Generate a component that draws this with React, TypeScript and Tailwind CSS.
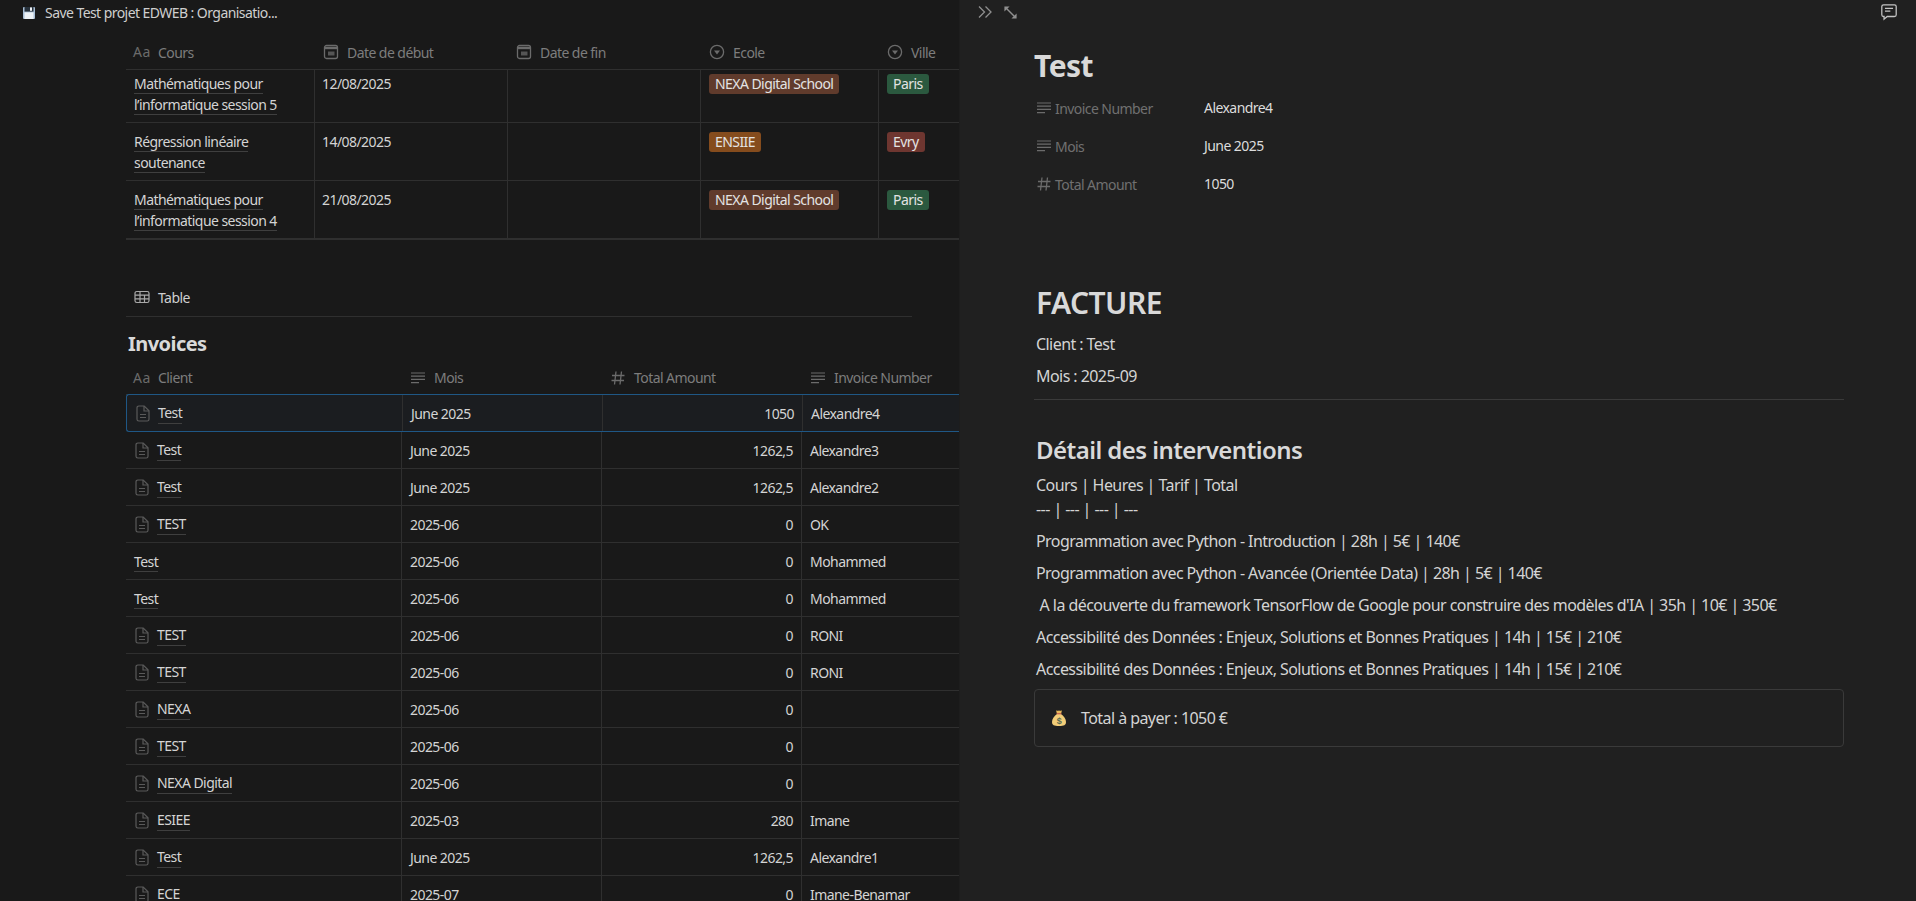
const F = "font-['Noto_Sans','Lato',sans-serif] tracking-[-0.035em]";
const Lines = ({ c = "w-4 h-4" }: { c?: string }) => (
  <svg viewBox="0 0 16 16" className={c} fill="none" stroke="#6b6b6b" strokeWidth="1.2"><path d="M1 3h14M1 6.2h14M1 9.4h14M1 12.6h8" /></svg>
);
const Hash = () => (
  <svg viewBox="0 0 16 16" className="w-4 h-4" fill="none" stroke="#6b6b6b" strokeWidth="1.3"><path d="M6 1.5 4.500 14.500M11.500 1.500 10 14.500M2 5.500h12.500M1.500 10.500h12.500" /></svg>
);
const Cal = () => (
  <svg viewBox="0 0 16 16" className="w-4 h-4" fill="none"><rect x="1.5" y="1.5" width="13" height="13" rx="2" stroke="#6b6b6b" strokeWidth="1.3" /><path d="M1.500 2.800h13v2.400h-13z" fill="#6b6b6b" /><path d="M5 7.500h6.500v4H5z" fill="#555" /></svg>
);
const Sel = () => (
  <svg viewBox="0 0 16 16" className="w-4 h-4" fill="none"><circle cx="8" cy="8" r="6.6" stroke="#6b6b6b" strokeWidth="1.3" /><path d="M5 6.500h6L8 10.500z" fill="#6b6b6b" /></svg>
);
const Aa = () => <span className="text-[14px] leading-none text-[#6b6b6b] w-[17px] tracking-[0.5px]">Aa</span>;
const Doc = () => (
  <svg viewBox="0 0 14 17" className="w-[14px] h-[17px] shrink-0" fill="none" stroke="#5a5a5a" strokeWidth="1.2"><path d="M2.800 1h5.400L13 5.800v8.400a1.800 1.800 0 0 1-1.800 1.800H2.800A1.800 1.800 0 0 1 1 14.200V2.800A1.800 1.800 0 0 1 2.800 1Z" /><path d="M8 1v5h5M4 9.500h6M4 12.500h6" /></svg>
);
const Floppy = () => (
  <svg viewBox="0 0 14 14" className="w-[14px] h-[14px]"><rect x="1" y="1" width="12" height="12" rx="1" fill="#a9bfd6" /><rect x="2.500" y="1" width="9" height="4.600" fill="#27313b" /><rect x="8" y="1.400" width="2" height="3.400" fill="#f2f4f6" /><rect x="2.500" y="6.400" width="9" height="6.600" fill="#eef2f6" /></svg>
);
const Bag = () => (
  <svg viewBox="0 0 16 18" className="w-4 h-[18px]"><path d="M5 1.200c1 .8 2 .8 3 .2 1 .6 2 .6 3-.2L10 5H6Z" fill="#e8b85a" /><path d="M6 5h4c3 2 5 5 5 8 0 3-2 4-7 4s-7-1-7-4c0-3 2-6 5-8Z" fill="#f2cd78" /><rect x="5.600" y="4.200" width="4.800" height="1.100" fill="#c0554a" /><text x="8" y="14.500" textAnchor="middle" fontSize="9" fontWeight="700" fill="#5b6b52" fontFamily="Liberation Sans">$</text></svg>
);

const Th = ({ icon, label, w, first }: { icon: React.ReactNode; label: string; w: string; first?: boolean }) => (
  <div className={`${w} shrink-0 flex items-center gap-[8px] ${first ? "pl-[7px]" : "pl-[9px]"} pb-[2px] text-[14px] text-[#7d7d7d]`}>
    {icon}<span>{label}</span>
  </div>
);

const Tag = ({ t, c }: { t: string; c: string }) => (
  <span className={`${c} inline-block h-[20px] leading-[20px] rounded-[3px] px-[6px] text-[14px] text-[#e3e3e3] whitespace-nowrap`}>{t}</span>
);

const courses = [
  { h: "h-[53px]", pt: "pt-[3px]", a: "Mathématiques pour", b: "l’informatique session 5", d: "12/08/2025", e: <Tag t="NEXA Digital School" c="bg-[#603b2c]" />, v: <Tag t="Paris" c="bg-[#2b593f]" /> },
  { h: "h-[58px]", pt: "pt-[8px]", a: "Régression linéaire", b: "soutenance", d: "14/08/2025", e: <Tag t="ENSIIE" c="bg-[#854c1d]" />, v: <Tag t="Evry" c="bg-[#6e3630]" /> },
  { h: "h-[59px]", pt: "pt-[8px]", a: "Mathématiques pour", b: "l’informatique session 4", d: "21/08/2025", e: <Tag t="NEXA Digital School" c="bg-[#603b2c]" />, v: <Tag t="Paris" c="bg-[#2b593f]" /> },
];

const invoices: [boolean, string, string, string, string][] = [
  [true, "Test", "June 2025", "1050", "Alexandre4"],
  [true, "Test", "June 2025", "1262,5", "Alexandre3"],
  [true, "Test", "June 2025", "1262,5", "Alexandre2"],
  [true, "TEST", "2025-06", "0", "OK"],
  [false, "Test", "2025-06", "0", "Mohammed"],
  [false, "Test", "2025-06", "0", "Mohammed"],
  [true, "TEST", "2025-06", "0", "RONI"],
  [true, "TEST", "2025-06", "0", "RONI"],
  [true, "NEXA", "2025-06", "0", ""],
  [true, "TEST", "2025-06", "0", ""],
  [true, "NEXA Digital", "2025-06", "0", ""],
  [true, "ESIEE", "2025-03", "280", "Imane"],
  [true, "Test", "June 2025", "1262,5", "Alexandre1"],
  [true, "ECE", "2025-07", "0", "Imane-Benamar"],
];

const U = ({ children }: { children: React.ReactNode }) => (
  <span className="border-b border-[#3f3f3f] leading-[20px] text-[#d4d4d4]">{children}</span>
);

const Prop = ({ icon, k, v }: { icon: React.ReactNode; k: string; v: string }) => (
  <div className="flex items-center h-[38px]">
    <div className="w-[170px] flex items-center gap-[3px] pl-[2px] text-[14px] text-[#707070]">{icon}<span>{k}</span></div>
    <div className="text-[14px] text-[#dcdcdc] pb-[1px]">{v}</div>
  </div>
);

const P = ({ children }: { children: React.ReactNode }) => <p className="leading-[24px] pt-[4px] pb-[4px] pl-[2px] text-[16px] text-[#d4d4d4] whitespace-pre">{children}</p>;

export default function App() {
  return (
    <div className={`${F} flex h-[901px] w-full overflow-hidden bg-[#191919] text-[#d4d4d4]`}>
      <div className="w-[960px] shrink-0 overflow-hidden">
        <div className="flex items-center h-[25px] pl-[22px] gap-[9px] text-[14px] text-[#cfcfcf]">
          <Floppy /><span>Save Test projet EDWEB : Organisatio...</span>
        </div>
        <div className="pl-[126px] pt-[12px]">
          <div className="flex h-[33px] items-center border-b border-[#2f2f2f]">
            <Th first w="w-[188px]" icon={<Aa />} label="Cours" />
            <Th w="w-[193px]" icon={<Cal />} label="Date de début" />
            <Th w="w-[193px]" icon={<Cal />} label="Date de fin" />
            <Th w="w-[178px]" icon={<Sel />} label="Ecole" />
            <Th w="w-[82px]" icon={<Sel />} label="Ville" />
          </div>
          {courses.map((r, i) => (
            <div key={i} className={`flex ${r.h} ${i === 2 ? "border-b-2" : "border-b"} border-[#2f2f2f] text-[14px] leading-[21px]`}>
              <div className={`w-[188px] shrink-0 ${r.pt} pl-[8px]`}>
                <div><U>{r.a}</U></div><div><U>{r.b}</U></div>
              </div>
              <div className={`w-[193px] shrink-0 border-l border-[#2f2f2f] ${r.pt} pl-[7px]`}>{r.d}</div>
              <div className="w-[193px] shrink-0 border-l border-[#2f2f2f]" />
              <div className={`w-[178px] shrink-0 border-l border-[#2f2f2f] ${r.pt} pl-[8px]`}>{r.e}</div>
              <div className={`grow border-l border-[#2f2f2f] ${r.pt} pl-[8px]`}>{r.v}</div>
            </div>
          ))}
          <div className="mt-[38px] w-[786px] h-[39px] border-b border-[#2f2f2f] flex items-center gap-[8px] pl-[8px] text-[14px] text-[#cfcfcf]">
            <svg viewBox="0 0 16 14" className="w-[16px] h-[14px]" fill="none" stroke="#a8a8a8" strokeWidth="1.2"><rect x="1" y="1.5" width="14" height="11" rx="1.8" /><path d="M1 5.200h14M1 8.800h14M6 1.500v11M10.500 5.200v7.300" /></svg>
            Table
          </div>
          <h2 className="pl-[2px] pt-[12px] h-[46px] text-[20px] leading-[30px] font-bold text-[#d9d9d9]">Invoices</h2>
          <div className="flex h-[32px] items-center border-b border-[#2f2f2f]">
            <Th first w="w-[275px]" icon={<Aa />} label="Client" />
            <Th w="w-[200px]" icon={<Lines />} label="Mois" />
            <Th w="w-[200px]" icon={<Hash />} label="Total Amount" />
            <Th w="w-[159px]" icon={<Lines />} label="Invoice Number" />
          </div>
          {invoices.map((r, i) => (
            <div key={i} className={`flex h-[37px] items-center border-b text-[14px] ${i === 0 ? "border-[#1f5785] border-t border-l -mt-px h-[38px] rounded-l-[3px] bg-[#1b1d20]" : "border-[#2f2f2f]"}`}>
              <div className="w-[275px] shrink-0 h-full flex items-center gap-[8px] pl-[9px]">
                {r[0] ? <><Doc /><U>{r[1]}</U></> : <span className="-ml-[1px]"><U>{r[1]}</U></span>}
              </div>
              <div className="w-[200px] shrink-0 h-full border-l border-[#2f2f2f] flex items-center pl-[8px]">{r[2]}</div>
              <div className="w-[200px] shrink-0 h-full border-l border-[#2f2f2f] flex items-center justify-end pr-[8px]">{r[3]}</div>
              <div className="grow h-full border-l border-[#2f2f2f] flex items-center pl-[8px]">{r[4]}</div>
            </div>
          ))}
        </div>
      </div>
      <div className="grow bg-[#202020] shadow-[-1px_0_0_#1d1d1d]">
        <div className="flex items-center justify-between h-[24px] pl-[17px] pr-[18px]">
          <div className="flex items-center gap-[10px]">
            <svg viewBox="0 0 16 16" className="w-4 h-4" fill="none" stroke="#8f8f8f" strokeWidth="1.3"><path d="M2 2.500 7.500 8 2 13.500M8.500 2.500 14 8l-5.500 5.500" /></svg>
            <svg viewBox="0 0 16 16" className="w-[15px] h-[15px]" fill="none"><path d="M4 4l8 8" stroke="#8f8f8f" strokeWidth="1.5" /><path d="M1.500 1.500H7L1.500 7ZM14.500 14.500H9L14.500 9Z" fill="#8f8f8f" /></svg>
          </div>
          <svg viewBox="0 0 20 20" className="w-[18px] h-[18px]" fill="none" stroke="#c4c4c4" strokeWidth="1.4"><path d="M4 2h12a2 2 0 0 1 2 2v9a2 2 0 0 1-2 2H8l-3.500 3v-3H4a2 2 0 0 1-2-2V4a2 2 0 0 1 2-2Z" /><path d="M5.500 6h9M5.500 9h6" /></svg>
        </div>
        <div className="pl-[74px] pr-[72px]">
          <h1 className="pt-[22px] h-[65px] text-[30px] leading-[40px] font-bold text-[#d9d9d9]">Test</h1>
          <Prop icon={<Lines />} k="Invoice Number" v="Alexandre4" />
          <Prop icon={<Lines />} k="Mois" v="June 2025" />
          <Prop icon={<Hash />} k="Total Amount" v="1050" />
          <h2 className="pt-[80px] pl-[2px] text-[30px] leading-[39px] font-semibold text-[#d9d9d9]">FACTURE</h2>
          <div className="pt-[6px]">
            <P>Client : Test</P>
            <P>Mois : 2025-09</P>
          </div>
          <div className="mt-[7px] border-t border-[#3a3a3a]" />
          <h3 className="pt-[32px] pl-[2px] text-[24px] leading-[36px] font-semibold text-[#d9d9d9]">Détail des interventions</h3>
          <div className="pt-[1px]">
            <p className="pt-[4px] pb-[4px] pl-[2px] leading-[24px] text-[16px]">Cours | Heures | Tarif | Total<br />--- | --- | --- | ---</p>
            <P>Programmation avec Python - Introduction | 28h | 5€ | 140€</P>
            <P>Programmation avec Python - Avancée (Orientée Data) | 28h | 5€ | 140€</P>
            <P> A la découverte du framework TensorFlow de Google pour construire des modèles d'IA | 35h | 10€ | 350€</P>
            <P>Accessibilité des Données : Enjeux, Solutions et Bonnes Pratiques | 14h | 15€ | 210€</P>
            <P>Accessibilité des Données : Enjeux, Solutions et Bonnes Pratiques | 14h | 15€ | 210€</P>
          </div>
          <div className="mt-[4px] h-[58px] border border-[#3a3a3a] rounded-[4px] flex items-center pl-[16px] gap-[14px] text-[16px]">
            <Bag /><span>Total à payer : 1050 €</span>
          </div>
        </div>
      </div>
    </div>
  );
}
